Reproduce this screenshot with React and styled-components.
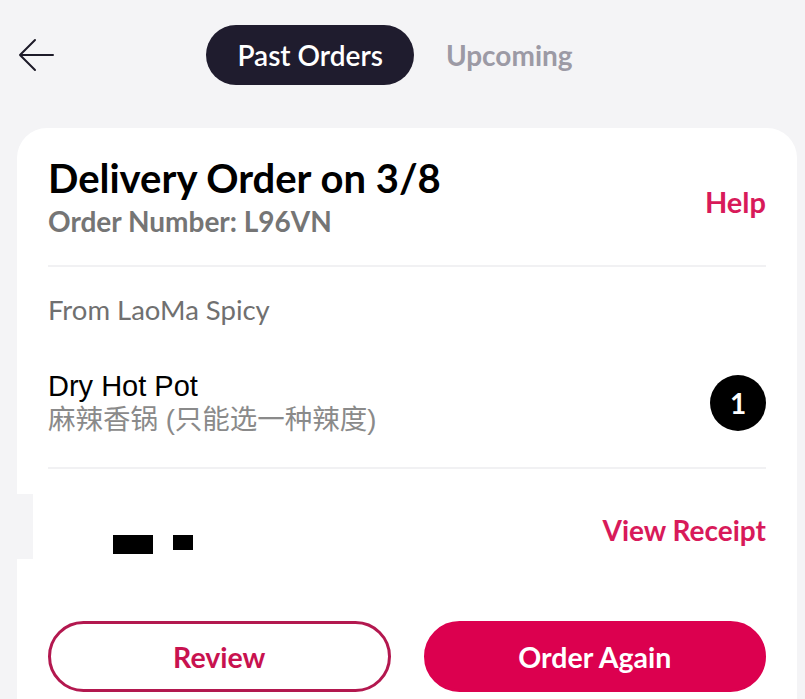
import styled, { createGlobalStyle } from 'styled-components';

const GlobalStyle = createGlobalStyle`
  body {
    margin: 0;
    background: #f4f4f6;
    font-family: 'Lato', 'Noto Sans CJK SC', sans-serif;
  }
`;

const PINK = '#d81a5a';

function BackArrow() {
  return (
    <svg width="38" height="34" viewBox="0 0 38 34" fill="none">
      <path
        d="M36 17H3M18 2L3 17l15 15"
        stroke="#1d1b29"
        strokeWidth="2"
        strokeLinecap="round"
        strokeLinejoin="round"
      />
    </svg>
  );
}

function App() {
  return (
    <StyledPage>
      <GlobalStyle />
      <StyledHeader>
        <StyledBack>
          <BackArrow />
        </StyledBack>
        <StyledTabs>
          <StyledTab $active>Past Orders</StyledTab>
          <StyledTab>Upcoming</StyledTab>
        </StyledTabs>
        <div />
      </StyledHeader>

      <StyledCard>
        <StyledTopRow>
          <div>
            <StyledTitle>Delivery Order on 3/8</StyledTitle>
            <StyledOrderNumber>Order Number: L96VN</StyledOrderNumber>
          </div>
          <StyledLink $size="29px" $shift="8px">
            Help
          </StyledLink>
        </StyledTopRow>

        <StyledDivider />

        <StyledFrom>From LaoMa Spicy</StyledFrom>

        <StyledItemRow>
          <div>
            <StyledItemName>Dry Hot Pot</StyledItemName>
            <StyledItemNote>麻辣香锅 (只能选一种辣度)</StyledItemNote>
          </div>
          <StyledQty>1</StyledQty>
        </StyledItemRow>

        <StyledDivider />

        <StyledFooterRow>
          <StyledNotch />
          <StyledRedactions>
            <StyledRedaction $w="40px" $h="19px" />
            <StyledRedaction $w="20px" $h="15px" />
          </StyledRedactions>
          <StyledLink $size="28px">View Receipt</StyledLink>
        </StyledFooterRow>

        <StyledButtons>
          <StyledButton>Review</StyledButton>
          <StyledButton $filled>Order Again</StyledButton>
        </StyledButtons>
      </StyledCard>
    </StyledPage>
  );
}

export default App;

const StyledPage = styled.div`
  width: 805px;
  height: 699px;
  overflow: hidden;
`;

const StyledHeader = styled.header`
  display: grid;
  grid-template-columns: 1fr auto 1fr;
  align-items: center;
  padding-top: 25px;
  height: 60px;
`;

const StyledBack = styled.div`
  display: flex;
  padding-left: 17px;
`;

const StyledTabs = styled.nav`
  display: flex;
  gap: 1px;
  margin-left: 5px;
`;

const StyledTab = styled.div`
  height: 60px;
  padding: 0 31px;
  border-radius: 30px;
  display: flex;
  align-items: center;
  font-size: 28px;
  font-weight: ${({ $active }) => ($active ? 600 : 700)};
  color: ${({ $active }) => ($active ? '#ffffff' : '#9c9aa5')};
  background: ${({ $active }) => ($active ? '#1f1c2e' : 'transparent')};
`;

const StyledCard = styled.section`
  margin: 43px 8px 0 17px;
  padding: 27px 31px 40px;
  background: #ffffff;
  border-radius: 30px;
`;

const StyledTopRow = styled.div`
  display: flex;
  justify-content: space-between;
  align-items: center;
  padding-bottom: 26px;
`;

const StyledTitle = styled.h1`
  margin: 0;
  font-size: 40px;
  line-height: 46px;
  font-weight: 700;
  color: #000000;
`;

const StyledOrderNumber = styled.div`
  margin-top: 2px;
  font-size: 28px;
  line-height: 36px;
  font-weight: 700;
  color: #757575;
`;

const StyledLink = styled.a`
  margin-top: ${({ $shift }) => $shift || 0};
  font-size: ${({ $size }) => $size};
  font-weight: 700;
  color: ${PINK};
  cursor: pointer;
`;

const StyledDivider = styled.hr`
  margin: 0;
  border: 0;
  height: 2px;
  background: #f1f1f3;
`;

const StyledFrom = styled.div`
  margin-top: 26px;
  font-size: 27.5px;
  line-height: 34px;
  color: #707070;
`;

const StyledItemRow = styled.div`
  display: flex;
  justify-content: space-between;
  align-items: center;
  padding: 42px 0 30px;
`;

const StyledItemName = styled.div`
  font-family: 'Liberation Sans', 'Noto Sans CJK SC', sans-serif;
  font-size: 29px;
  line-height: 34px;
  color: #000000;
`;

const StyledItemNote = styled.div`
  font-family: 'Liberation Sans', 'Noto Sans CJK SC', sans-serif;
  font-size: 27.5px;
  line-height: 34px;
  color: #8a8a8a;
`;

const StyledQty = styled.div`
  width: 56px;
  height: 56px;
  border-radius: 50%;
  background: #000000;
  color: #ffffff;
  display: flex;
  align-items: center;
  justify-content: center;
  font-size: 28px;
  font-weight: 700;
`;

const StyledFooterRow = styled.div`
  display: flex;
  align-items: center;
  height: 122px;
`;

const StyledNotch = styled.div`
  align-self: flex-start;
  margin: 25px 0 0 -31px;
  width: 16px;
  height: 65px;
  background: #f4f4f6;
`;

const StyledRedactions = styled.div`
  flex: 1;
  align-self: flex-start;
  display: flex;
  align-items: flex-start;
  gap: 20px;
  margin: 66px 0 0 80px;
`;

const StyledRedaction = styled.div`
  width: ${({ $w }) => $w};
  height: ${({ $h }) => $h};
  background: #000000;
`;

const StyledButtons = styled.div`
  display: grid;
  grid-template-columns: 1fr 1fr;
  gap: 33px;
  margin-top: 30px;
`;

const StyledButton = styled.button`
  height: 71px;
  border-radius: 36px;
  border: 3px solid ${({ $filled }) => ($filled ? '#dc004f' : '#b3184f')};
  background: ${({ $filled }) => ($filled ? '#dc004f' : '#ffffff')};
  color: ${({ $filled }) => ($filled ? '#ffffff' : '#c8124f')};
  font-family: 'Lato', sans-serif;
  font-size: 28.5px;
  font-weight: 700;
  cursor: pointer;
`;
